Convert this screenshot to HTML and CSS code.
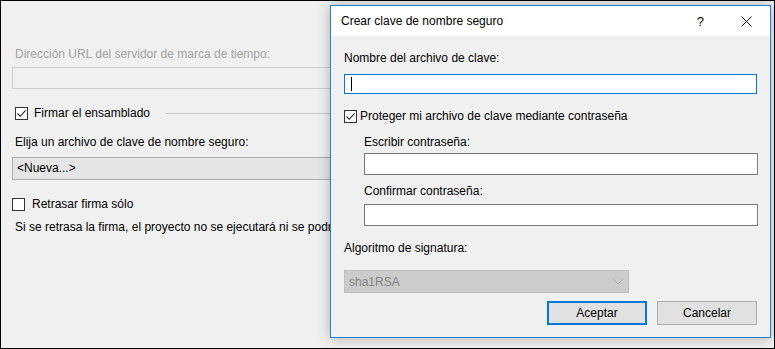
FILE: index.html
```html
<!DOCTYPE html>
<html lang="es">

<head>
    <meta charset="UTF-8" />
    <title>Firma</title>
    <link rel="stylesheet" href="styles.css">
</head>

<body>
    <div class="screen">
        <div class="signing">
            <div class="label disabled">Dirección URL del servidor de marca de tiempo:</div>
            <div class="field field_disabled"></div>

            <div class="check_row sign_row">
                <span class="box">
                    <svg width="11" height="11" viewBox="0 0 11 11"><path d="M1.5 5.5 L4.2 8.3 L9.6 2.3" fill="none" stroke="#222" stroke-width="1.1"/></svg>
                </span>
                <span class="check_text">Firmar el ensamblado</span>
                <span class="rule"></span>
            </div>

            <div class="label choose">Elija un archivo de clave de nombre seguro:</div>
            <div class="combo">&lt;Nueva...&gt;</div>

            <div class="check_row delay_row">
                <span class="box"></span>
                <span class="check_text">Retrasar firma sólo</span>
            </div>

            <div class="label note">Si se retrasa la firma, el proyecto no se ejecutará ni se podrá depurar.</div>
        </div>

        <div class="dialog">
            <div class="title_bar">
                <span class="title">Crear clave de nombre seguro</span>
                <span class="help">?</span>
                <svg class="close" width="11" height="11" viewBox="0 0 11 11"><path d="M0.5 0.5 L10.5 10.5 M10.5 0.5 L0.5 10.5" stroke="#111" stroke-width="1"/></svg>
            </div>
            <div class="dialog_body">
                <div class="label key_label">Nombre del archivo de clave:</div>
                <div class="input input_focus"><span class="caret"></span></div>

                <div class="check_row protect_row">
                    <span class="box">
                        <svg width="11" height="11" viewBox="0 0 11 11"><path d="M1.5 5.5 L4.2 8.3 L9.6 2.3" fill="none" stroke="#222" stroke-width="1.1"/></svg>
                    </span>
                    <span class="check_text">Proteger mi archivo de clave mediante contraseña</span>
                </div>

                <div class="password">
                    <div class="label pass_label">Escribir contraseña:</div>
                    <div class="input input_pass"></div>
                    <div class="label confirm_label">Confirmar contraseña:</div>
                    <div class="input input_pass"></div>
                </div>

                <div class="label algo_label">Algoritmo de signatura:</div>
                <div class="select">
                    <span>sha1RSA</span>
                    <svg width="10" height="6" viewBox="0 0 10 6"><path d="M0.5 0.5 L5 5 L9.5 0.5" fill="none" stroke="#a8a8a8" stroke-width="1"/></svg>
                </div>

                <div class="buttons">
                    <div class="btn btn_default">Aceptar</div>
                    <div class="btn">Cancelar</div>
                </div>
            </div>
        </div>
    </div>
</body>

</html>
```

FILE: styles.css
```css
* {
    box-sizing: border-box;
    font-family: 'Liberation Sans', Arial, sans-serif;
    font-size: 12px;
}

body {
    margin: 0;
    padding: 0;
    background-color: #f0f0f0;
}

.screen {
    width: 775px;
    height: 349px;
    border: 1px solid #000;
    background-color: #f0f0f0;
    position: relative;
    overflow: hidden;
    color: #000;
}

.label {
    line-height: 16px;
    height: 16px;
    white-space: nowrap;
}

.disabled {
    color: #a3a3a3;
}

/* left page */

.signing {
    padding-left: 11px;
    padding-top: 45px;
    width: 420px;
}

.signing .label {
    padding-left: 3px;
}

.field,
.combo {
    width: 340px;
    border: 1px solid #d9d9d9;
}

.field_disabled {
    height: 22px;
    margin-top: 5px;
    background-color: #f0f0f0;
    border-color: #cccccc;
}

.check_row {
    display: flex;
    align-items: center;
    height: 16px;
    white-space: nowrap;
}

.box {
    width: 13px;
    height: 13px;
    border: 1px solid #333;
    background-color: #fff;
    display: flex;
    align-items: center;
    justify-content: center;
    flex-shrink: 0;
}

.sign_row {
    margin-top: 16px;
    padding-left: 3px;
}

.sign_row .check_text {
    margin-left: 6px;
}

.rule {
    flex-grow: 1;
    height: 1px;
    background-color: #c8c8c8;
    margin-left: 16px;
}

.choose {
    margin-top: 13px;
}

.combo {
    height: 23px;
    margin-top: 7px;
    background-color: #e5e5e5;
    border-color: #acacac;
    line-height: 21px;
    padding-left: 4px;
}

.delay_row {
    margin-top: 16px;
}

.delay_row .check_text {
    margin-left: 7px;
}

.note {
    margin-top: 7px;
}

/* dialog */

.dialog {
    position: absolute;
    left: 329px;
    top: 4px;
    width: 441px;
    height: 333px;
    border: 1px solid #1883d7;
    background-color: #f0f0f0;
    box-shadow: 0 0 12px rgba(0, 0, 0, 0.28);
}

.title_bar {
    height: 30px;
    background-color: #fff;
    display: flex;
    align-items: center;
    padding-left: 10px;
}

.title {
    flex-grow: 1;
}

.help {
    font-size: 13px;
    margin-right: 37px;
}

.close {
    margin-right: 18px;
}

.dialog_body {
    padding: 0 13px 0 13px;
}

.key_label {
    margin-top: 14px;
}

.input {
    background-color: #fff;
    border: 1px solid #7a7a7a;
    height: 22px;
}

.input_focus {
    margin-top: 8px;
    height: 20px;
    border-color: #0078d7;
    display: flex;
    align-items: center;
    padding-left: 6px;
}

.caret {
    width: 1px;
    height: 14px;
    background-color: #000;
}

.protect_row {
    margin-top: 14px;
}

.protect_row .check_text {
    margin-left: 3px;
}

.password {
    padding-left: 20px;
    margin-right: -1px;
}

.pass_label {
    margin-top: 10px;
}

.input_pass {
    margin-top: 3px;
}

.confirm_label {
    margin-top: 8px;
}

.confirm_label + .input_pass {
    margin-top: 5px;
}

.algo_label {
    margin-top: 14px;
}

.select {
    width: 285px;
    height: 23px;
    margin-top: 14px;
    background-color: #cccccc;
    border: 1px solid #bfbfbf;
    color: #838383;
    display: flex;
    align-items: center;
    justify-content: space-between;
    padding: 0 5px 0 4px;
}

.buttons {
    display: flex;
    justify-content: flex-end;
    gap: 10px;
    margin-top: 8px;
}

.btn {
    width: 100px;
    height: 24px;
    border: 1px solid #adadad;
    background-color: #e1e1e1;
    display: flex;
    align-items: center;
    justify-content: center;
}

.btn_default {
    border: 2px solid #0078d7;
}
```
